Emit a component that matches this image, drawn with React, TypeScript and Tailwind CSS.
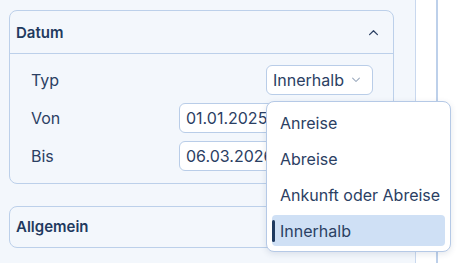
import { ReactNode } from "react";

const Chevron = ({ up, className }: { up?: boolean; className?: string }) => (
  <svg viewBox="0 0 12 8" className={className} fill="none" stroke="currentColor" strokeWidth={1.4} strokeLinecap="round" strokeLinejoin="round">
    {up ? <path d="M1.5 6.5 6 2l4.5 4.5" /> : <path d="M1.5 1.5 6 6l4.5-4.5" />}
  </svg>
);

function Row({ label, children }: { label: string; children: ReactNode }) {
  return (
    <div className="flex items-center justify-between">
      <span className="text-[16px] text-[#2b4063]">{label}</span>
      {children}
    </div>
  );
}

const options = ["Anreise", "Abreise", "Ankunft oder Abreise", "Innerhalb"];

export default function App() {
  const selected = "Innerhalb";

  return (
    <div className="relative flex h-[263px] w-[460px] overflow-hidden bg-white font-['Inter',sans-serif] text-[#2b4063]">
      <div className="w-[416px] border-r border-[#c9d8ee] bg-[#f3f7fc] pl-[9px] pr-[21px] pt-[10px]">
        {/* Datum */}
        <div className="rounded-lg border border-[#bcd0ea]">
          <div className="flex h-[43px] items-center justify-between border-b border-[#bcd0ea] pl-[6px] pr-[14px]">
            <span className="pt-[3px] text-[15px] font-semibold text-[#1f3a60]">Datum</span>
            <Chevron up className="h-[7px] w-[11px] text-[#2b4063]" />
          </div>
          <div className="flex flex-col gap-[8px] pb-[12px] pl-[21px] pr-[20px] pt-[11px]">
            <Row label="Typ">
              <div className="flex h-[30px] w-[107px] items-center justify-between rounded-md border border-[#b9cde8] bg-white pl-[6px] pr-[11px] text-[16px]">
                <span>Innerhalb</span>
                <Chevron className="h-[6px] w-[10px] text-[#97a6bb]" />
              </div>
            </Row>
            <Row label="Von">
              <div className="flex h-[30px] w-[194px] items-center rounded-md border border-[#b9cde8] bg-white px-[6px] text-[16px]">
                01.01.2025
              </div>
            </Row>
            <Row label="Bis">
              <div className="flex h-[30px] w-[194px] items-center rounded-md border border-[#b9cde8] bg-white px-[6px] text-[16px]">
                06.03.2026
              </div>
            </Row>
          </div>
        </div>

        {/* Allgemein */}
        <div className="mt-[22px] flex h-[42px] items-center rounded-lg border border-[#bcd0ea] pl-[6px]">
          <span className="pt-[1px] text-[15px] font-semibold text-[#1f3a60]">Allgemein</span>
        </div>
      </div>
      <div className="w-[22px] border-r-2 border-[#bdd0ea] bg-white" />

      {/* Dropdown */}
      <div className="absolute left-[266px] top-[101px] flex w-[185px] flex-col gap-[5px] rounded-lg border border-[#b5c9e6] bg-white p-[5px] shadow-[0_2px_6px_rgba(30,58,96,0.12)]">
        {options.map((o) => (
          <div
            key={o}
            className={
              o === selected
                ? "relative flex h-[31px] items-center rounded-[4px] bg-[#cfe0f5] pl-[8px] text-[16px]"
                : "flex h-[31px] items-center pl-[8px] text-[16px]"
            }
          >
            {o === selected && <span className="absolute left-0 top-[5px] h-[22px] w-[3px] rounded-full bg-[#1f3a60]" />}
            {o}
          </div>
        ))}
      </div>
    </div>
  );
}
